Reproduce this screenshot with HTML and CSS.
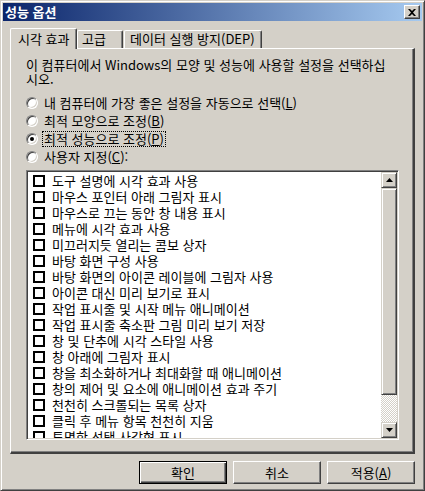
FILE: index.html
```html
<!DOCTYPE html>
<html lang="ko">
  <head>
    <meta charset="UTF-8" />
    <title>성능 옵션</title>
    <link rel="stylesheet" href="styles.css">
  </head>
  <body>
    <div class="window">
      <div class="titlebar">
        <span class="title">성능 옵션</span>
        <button class="close">
          <svg width="8" height="7" viewBox="0 0 8 7">
            <path d="M0 0h2l2 2 2-2h2L5 3.5 8 7H6L4 5 2 7H0l3-3.5z" fill="#000" />
          </svg>
        </button>
      </div>

      <div class="content">
        <div class="tabs">
          <div class="tab active">시각 효과</div>
          <div class="tab tab-adv">고급</div>
          <div class="tab tab-dep">데이터 실행 방지(DEP)</div>
        </div>

        <div class="panel">
          <p class="desc">
            이 컴퓨터에서 Windows의 모양 및 성능에 사용할 설정을 선택하십<br />시오.
          </p>

          <div class="radios">
            <div class="radio-row">
              <span class="radio"></span>
              <span class="radio-label">내 컴퓨터에 가장 좋은 설정을 자동으로 선택(<u>L</u>)</span>
            </div>
            <div class="radio-row">
              <span class="radio"></span>
              <span class="radio-label">최적 모양으로 조정(<u>B</u>)</span>
            </div>
            <div class="radio-row">
              <span class="radio checked"></span>
              <span class="radio-label focused">최적 성능으로 조정(<u>P</u>)</span>
            </div>
            <div class="radio-row">
              <span class="radio"></span>
              <span class="radio-label">사용자 지정(<u>C</u>):</span>
            </div>
          </div>

          <div class="listbox">
            <ul class="items">
              <li><span class="check"></span>도구 설명에 시각 효과 사용</li>
              <li><span class="check"></span>마우스 포인터 아래 그림자 표시</li>
              <li><span class="check"></span>마우스로 끄는 동안 창 내용 표시</li>
              <li><span class="check"></span>메뉴에 시각 효과 사용</li>
              <li><span class="check"></span>미끄러지듯 열리는 콤보 상자</li>
              <li><span class="check"></span>바탕 화면 구성 사용</li>
              <li><span class="check"></span>바탕 화면의 아이콘 레이블에 그림자 사용</li>
              <li><span class="check"></span>아이콘 대신 미리 보기로 표시</li>
              <li><span class="check"></span>작업 표시줄 및 시작 메뉴 애니메이션</li>
              <li><span class="check"></span>작업 표시줄 축소판 그림 미리 보기 저장</li>
              <li><span class="check"></span>창 및 단추에 시각 스타일 사용</li>
              <li><span class="check"></span>창 아래에 그림자 표시</li>
              <li><span class="check"></span>창을 최소화하거나 최대화할 때 애니메이션</li>
              <li><span class="check"></span>창의 제어 및 요소에 애니메이션 효과 주기</li>
              <li><span class="check"></span>천천히 스크롤되는 목록 상자</li>
              <li><span class="check"></span>클릭 후 메뉴 항목 천천히 지움</li>
              <li><span class="check"></span>투명한 선택 사각형 표시</li>
            </ul>
            <div class="scrollbar">
              <div class="sb-btn">
                <svg width="7" height="4" viewBox="0 0 7 4"><path d="M3.5 0L7 4H0z" fill="#000" /></svg>
              </div>
              <div class="sb-thumb"></div>
              <div class="sb-track"></div>
              <div class="sb-btn">
                <svg width="7" height="4" viewBox="0 0 7 4"><path d="M0 0h7L3.5 4z" fill="#000" /></svg>
              </div>
            </div>
          </div>
        </div>

        <div class="buttons">
          <button class="btn default">확인</button>
          <button class="btn">취소</button>
          <button class="btn">적용(<u>A</u>)</button>
        </div>
      </div>
    </div>
  </body>
</html>
```

FILE: styles.css
```css
body {
  margin: 0;
  font-family: "Noto Sans CJK KR", "Liberation Sans", sans-serif;
  font-size: 13px;
  color: #000;
  background: #d4d0c8;
}
.window {
  width: 425px;
  height: 491px;
  box-sizing: border-box;
  background: #d4d0c8;
  border: 1px solid;
  border-color: #d4d0c8 #404040 #404040 #d4d0c8;
  box-shadow: inset 1px 1px #fff, inset -1px -1px #808080;
  padding: 2px;
}
.titlebar {
  height: 18px;
  display: flex;
  align-items: center;
  justify-content: space-between;
  padding: 0 2px;
  background: linear-gradient(to right, #0a246a, #a6caf0);
}
.title {
  color: #fff;
  font-weight: bold;
  line-height: 18px;
}
.close {
  width: 16px;
  height: 14px;
  padding: 0;
  margin: 0;
  display: flex;
  align-items: center;
  justify-content: center;
  background: #d4d0c8;
  border: 1px solid;
  border-color: #fff #404040 #404040 #fff;
  box-shadow: inset -1px -1px #808080;
}
.content {
  padding: 7px 7px 4px 7px;
}
.tabs {
  display: flex;
  align-items: flex-end;
  height: 20px;
}
.tab {
  box-sizing: border-box;
  height: 18px;
  line-height: 16px;
  padding: 0 6px;
  white-space: nowrap;
  border: 1px solid;
  border-bottom: none;
  border-color: #fff #404040 #fff #fff;
  border-radius: 2px 2px 0 0;
  box-shadow: inset -1px 0 #808080;
  background: #d4d0c8;
}
.tab.active {
  width: 67px;
  height: 21px;
  line-height: 19px;
  margin-bottom: -1px;
  padding-left: 7px;
  z-index: 1;
  position: relative;
}
.tab-adv {
  width: 46px;
  padding-left: 4px;
}
.tab-dep {
  width: 138px;
  margin-left: 1px;
  padding-left: 5px;
}
.panel {
  box-sizing: border-box;
  width: 405px;
  height: 406px;
  border-style: solid;
  border-width: 1px 2px 2px 1px;
  border-color: #fff #404040 #404040 #fff;
  box-shadow: inset -1px -1px #808080;
  padding: 9px 14px 0 15px;
}
.desc {
  margin: 0;
  line-height: 14px;
  white-space: nowrap;
}
.radios {
  margin-top: 8px;
}
.radio-row {
  height: 18px;
  display: flex;
  align-items: center;
}
.radio {
  box-sizing: border-box;
  width: 12px;
  height: 12px;
  border-radius: 50%;
  border: 1px solid;
  border-color: #808080 #fff #fff #808080;
  box-shadow: inset 1px 1px #404040, inset -1px -1px #d4d0c8;
  background: #fff;
  display: flex;
  align-items: center;
  justify-content: center;
}
.radio.checked::after {
  content: "";
  width: 4px;
  height: 4px;
  border-radius: 50%;
  background: #000;
}
.radio-label {
  margin-left: 4px;
  padding: 0 1px;
  line-height: 14px;
  border: 1px solid transparent;
}
.radio-label.focused {
  border: 1px dotted #000;
}
.listbox {
  margin-top: 4px;
  width: 373px;
  height: 270px;
  box-sizing: border-box;
  display: flex;
  background: #fff;
  border: 1px solid;
  border-color: #808080 #fff #fff #808080;
  box-shadow: inset 1px 1px #404040, inset -1px -1px #d4d0c8;
  padding: 1px;
}
.items {
  flex: 1;
  margin: 0;
  padding: 1px 0 0 0;
  list-style: none;
  overflow: hidden;
}
.items li {
  height: 16px;
  display: flex;
  align-items: center;
  white-space: nowrap;
  padding-left: 5px;
  line-height: 16px;
}
.check {
  box-sizing: border-box;
  width: 12px;
  height: 12px;
  border: 2px solid #000;
  background: #fff;
  margin-right: 7px;
  flex-shrink: 0;
}
.scrollbar {
  width: 16px;
  display: flex;
  flex-direction: column;
}
.sb-btn,
.sb-thumb {
  box-sizing: border-box;
  background: #d4d0c8;
  border: 1px solid;
  border-color: #d4d0c8 #404040 #404040 #d4d0c8;
  box-shadow: inset 1px 1px #fff, inset -1px -1px #808080;
}
.sb-btn {
  height: 16px;
  display: flex;
  align-items: center;
  justify-content: center;
}
.sb-thumb {
  height: 207px;
}
.sb-track {
  flex: 1;
  background: repeating-conic-gradient(#d4d0c8 0 25%, #fff 0 50%) 0 0 / 2px 2px;
}
.buttons {
  margin-top: 7px;
  display: flex;
  justify-content: flex-end;
  gap: 6px;
  width: 405px;
}
.btn {
  width: 88px;
  height: 23px;
  padding: 0;
  margin: 0;
  font-family: inherit;
  font-size: 13px;
  color: #000;
  background: #d4d0c8;
  border: 1px solid;
  border-color: #fff #404040 #404040 #fff;
  box-shadow: inset -1px -1px #808080;
}
.btn.default {
  border: 1px solid #000;
  box-shadow: inset 1px 1px #fff, inset -1px -1px #404040, inset -2px -2px #808080;
}
```
